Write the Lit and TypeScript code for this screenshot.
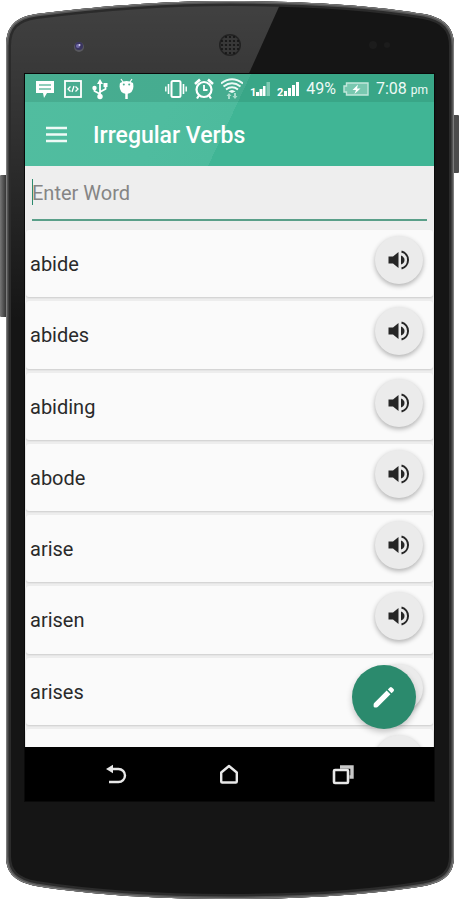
import { LitElement, html, css, svg } from "lit";
import { customElement, state } from "lit/decorators.js";

const BODY =
  "M6 46C6 26 16 17 36 14C92 7 160 1 230 1C300 1 370 5 424 14C445 18 454 28 454 46V856C454 874 444 882 424 886C370 895 300 899 230 899C160 899 92 895 36 886C16 882 6 874 6 856Z";

const VERBS = ["abide", "abides", "abiding", "abode", "arise", "arisen", "arises"];

@customElement("phone-frame")
class PhoneFrame extends LitElement {
  static styles = css`
    :host {
      display: block;
    }
    .art {
      display: block;
      width: 100%;
      height: 100%;
    }
  `;

  render() {
    const holes = [];
    for (let y = 37; y <= 53; y += 4) {
      for (let x = 222; x <= 238; x += 4) {
        if (Math.hypot(x - 230, y - 45) < 10) {
          holes.push(svg`<circle cx=${x} cy=${y} r="1.1" fill="#151515"/>`);
        }
      }
    }
    return html`
      <svg class="art" viewBox="0 0 459 900" preserveAspectRatio="none" aria-hidden="true">
        <defs>
          <linearGradient id="glare" x1="0" y1="0" x2="0" y2="1">
            <stop offset="0" stop-color="#fff" stop-opacity=".19" />
            <stop offset=".35" stop-color="#fff" stop-opacity=".13" />
            <stop offset="1" stop-color="#fff" stop-opacity="0" />
          </linearGradient>
          <linearGradient id="key" x1="0" y1="0" x2="1" y2="0">
            <stop offset="0" stop-color="#777" />
            <stop offset=".5" stop-color="#4a4a4a" />
            <stop offset="1" stop-color="#222" />
          </linearGradient>
          <clipPath id="body"><path d=${BODY} /></clipPath>
        </defs>
        <rect x="0" y="175" width="8" height="142" rx="1" fill="url(#key)" />
        <rect x="452" y="115" width="7" height="58" rx="1" fill="#4c4c4c" />
        <path d=${BODY} fill="#151515" />
        <g clip-path="url(#body)">
          <path d="M0 0H282L138 320H0Z" fill="url(#glare)" />
          <path d=${BODY} fill="none" stroke="#2b2b2b" stroke-width="10" />
          <path d=${BODY} fill="none" stroke="#555" stroke-width="5" />
          <path d=${BODY} fill="none" stroke="#7c7c7c" stroke-width="2" />
        </g>
        <circle cx="79" cy="47" r="5" fill="#58585e" />
        <circle cx="79" cy="46" r="4" fill="#3a3560" />
        <circle cx="78" cy="46" r="2" fill="#6f68a6" />
        <circle cx="79.500" cy="45" r="1" fill="#d8d4f0" />
        <circle cx="230" cy="45" r="11" fill="#222" />
        <circle cx="230" cy="45" r="9.500" fill="#383838" />
        ${holes}
        <circle cx="373" cy="45" r="4" fill="#1c1c1c" />
        <circle cx="387" cy="45" r="3" fill="#1c1c1c" />
      </svg>
    `;
  }
}

@customElement("status-bar")
class StatusBar extends LitElement {
  static styles = css`
    :host {
      display: flex;
      align-items: center;
      justify-content: space-between;
      box-sizing: border-box;
      height: 28px;
      padding: 2px 8px 0 11px;
      background: rgba(0, 40, 20, 0.1);
      color: #eefaf6;
      font-size: 16px;
      line-height: 20px;
      white-space: nowrap;
    }
    .group {
      display: flex;
      align-items: center;
    }
    .notices {
      gap: 10px;
    }
    .system {
      gap: 7px;
    }
    .icon {
      display: block;
      flex: none;
      height: 22px;
    }
    .small {
      font-size: 12px;
    }
    .time {
      width: 50px;
    }
    .digit {
      font: bold 11px Roboto, sans-serif;
    }
  `;

  render() {
    return html`
      <div class="group notices">
        <svg class="icon" width="18" viewBox="0 0 18 22" aria-hidden="true">
          <path d="M0 3H18V15H11L8 20L7 15H0Z" fill="#fff" />
          <path d="M3 7H15M3 11H15" stroke="#69bfa5" stroke-width="1.500" />
        </svg>
        <svg class="icon" width="18" viewBox="0 0 18 22" fill="none" stroke="#fff" aria-hidden="true">
          <rect x="1" y="3" width="16" height="16" stroke-width="1.800" />
          <path d="M6.500 8.500L4 11L6.500 13.500M11.500 8.500L14 11L11.500 13.500M10 8L8 14" stroke-width="1.300" />
        </svg>
        <svg class="icon" width="16" viewBox="0 0 16 22" fill="none" stroke="#fff" aria-hidden="true">
          <path d="M8 4V18M8 16L2.500 13V10M8 14L13.500 11V7" stroke-width="1.800" />
          <path d="M8 1L11 6H5Z" fill="#fff" stroke="none" />
          <circle cx="8" cy="18.500" r="2.700" fill="#fff" stroke="none" />
          <circle cx="2.500" cy="10" r="2.200" fill="#fff" stroke="none" />
          <rect x="11.500" y="5" width="4" height="4" fill="#fff" stroke="none" />
        </svg>
        <svg class="icon" width="16" viewBox="0 0 16 22" aria-hidden="true">
          <path d="M3 1L5 4M14 1L12 4" stroke="#fff" stroke-width="1.200" />
          <path d="M2 5Q8.500 1 15 5Q17 15 8.500 16Q0 15 2 5Z" fill="#fff" />
          <path d="M8.500 15V21" stroke="#fff" stroke-width="2.500" />
          <circle cx="5.800" cy="6.500" r="1" fill="#4daf92" />
          <circle cx="11.200" cy="6.500" r="1" fill="#4daf92" />
        </svg>
      </div>
      <div class="group system">
        <svg class="icon" width="22" viewBox="0 0 22 22" fill="none" stroke="#fff" aria-hidden="true">
          <rect x="6.500" y="3" width="9" height="16" rx="1.500" stroke-width="2" />
          <path d="M3.500 6V16M18.500 6V16" stroke-width="1.600" />
          <path d="M.8 8.500V13.500M21.200 8.500V13.500" stroke-width="1.400" />
        </svg>
        <svg class="icon" width="20" viewBox="0 0 20 22" fill="none" stroke="#fff" aria-hidden="true">
          <circle cx="10" cy="11.500" r="7.500" stroke-width="2.200" />
          <path d="M10 7V12H13.500" stroke-width="1.800" />
          <path d="M1 6L6 1.500M19 6L14 1.500" stroke-width="2.600" />
          <path d="M5 17.500L3 20.500M15 17.500L17 20.500" stroke-width="2.200" />
        </svg>
        <svg class="icon" width="22" viewBox="0 0 22 22" fill="none" stroke="#eefaf6" aria-hidden="true">
          <path d="M0 5.500Q11 -3 22 5.500M2.500 8.500Q11 2 19.500 8.500M5 11.500Q11 7 17 11.500" stroke-width="2" />
          <path d="M7.500 13.500Q11 10.500 14.500 13.500L11 15Z" fill="#eefaf6" stroke="none" />
          <path d="M8 15L10.500 18H9V21H7V18H5.500ZM14 21L11.500 18H13V15H15V18H16.500Z" fill="#a9dccb" stroke="none" />
        </svg>
        <svg class="icon" width="20" viewBox="0 0 20 22" fill="#fff" role="img" aria-label="SIM 1 signal">
          <text class="digit" x="0" y="18">1</text>
          <path d="M6 14H9V18H6ZM9.500 11H12.500V18H9.500ZM13 8H15.500V18H13Z" />
          <path d="M16.500 4H20V18H16.500Z" fill="#7fcab3" />
        </svg>
        <svg class="icon" width="22" viewBox="0 0 22 22" fill="#fff" role="img" aria-label="SIM 2 signal">
          <text class="digit" x="0" y="18">2</text>
          <path d="M7 13H10V18H7ZM11 10H14V18H11ZM15 7H18V18H15ZM19 4H22V18H19Z" />
        </svg>
        <span>49%</span>
        <svg class="icon" width="26" viewBox="0 0 26 22" aria-hidden="true">
          <path d="M3.500 5H25V17H3.500V14H1V8H3.500Z" fill="#79c8b0" stroke="#c2e7dc" stroke-width="1.400" />
          <path d="M15 6.500L9.500 12H13L11.500 16L17.500 10.500H14Z" fill="#fff" />
        </svg>
        <span class="time">7:08 <span class="small">pm</span></span>
      </div>
    `;
  }
}

@customElement("verb-row")
class VerbRow extends LitElement {
  static properties = { word: {} };
  declare word: string;

  static styles = css`
    :host {
      display: flex;
      align-items: flex-start;
      justify-content: space-between;
      box-sizing: border-box;
      min-height: 64px;
      margin: 1px 1px 3px;
      padding: 6px 10px 0 4px;
      border-radius: 3px;
      background: #fafafa;
      box-shadow: 0 1px 2px rgba(0, 0, 0, 0.14);
    }
    .word {
      padding-top: 16px;
      font-size: 20px;
      line-height: 24px;
      color: #2a2a2a;
    }
    .speak {
      display: grid;
      place-items: center;
      flex: none;
      width: 48px;
      height: 48px;
      padding: 0;
      border: 0;
      border-radius: 50%;
      background: #ebebeb;
      box-shadow: 0 2px 5px rgba(0, 0, 0, 0.3);
    }
  `;

  render() {
    return html`
      <span class="word">${this.word}</span>
      <button class="speak" aria-label="Pronounce ${this.word ?? "next verb"}">
        <svg width="24" height="24" viewBox="0 0 24 24" fill="#262626" aria-hidden="true">
          <path d="M1.500 8.500V15.500H6L11.500 20V4L6 8.500Z" />
          <path d="M14 7.500Q17.500 9 17.500 12Q17.500 15 14 16.500Z" />
          <path d="M14.500 3.500A8.800 8.800 0 0 1 14.500 20.500" fill="none" stroke="#262626" stroke-width="2" />
        </svg>
      </button>
    `;
  }
}

@customElement("app-root")
class AppRoot extends LitElement {
  static styles = css`
    :host {
      display: block;
      position: relative;
      min-height: 100vh;
      background: #fff;
      font-family: Roboto, "Noto Sans", sans-serif;
    }
    .frame {
      position: absolute;
      inset: 0;
    }
    .device {
      position: relative;
      display: flex;
      flex-direction: column;
      box-sizing: border-box;
      min-height: 100vh;
      padding: 74px 25px 99px;
    }
    .screen {
      display: flex;
      flex: 1;
      flex-direction: column;
      background: #000;
      box-shadow: 0 0 0 1px #0a0a0a;
    }
    .top {
      position: relative;
      background: linear-gradient(115deg, #51bd9f 0, #4fbc9f 35%, #4dbb9d 50%, #40b595 50%);
      box-shadow: 0 1px 3px rgba(0, 0, 0, 0.3);
    }
    .toolbar {
      display: flex;
      align-items: center;
      gap: 24px;
      height: 64px;
      padding-left: 20px;
    }
    .menu {
      display: block;
      padding: 0;
      border: 0;
      background: none;
    }
    .icon {
      display: block;
    }
    .title {
      margin: 0;
      padding-top: 4px;
      color: #fff;
      font-size: 23px;
      font-weight: 500;
      line-height: 28px;
    }
    .content {
      position: relative;
      display: flex;
      flex: 1;
      flex-direction: column;
      overflow: hidden;
      background: #eee;
    }
    .search {
      display: block;
      height: 63px;
      box-sizing: border-box;
      margin: 0 1px;
      padding: 13px 6px 8px;
      background: #eee;
    }
    .field {
      display: block;
      position: relative;
    }
    .field::before {
      content: "";
      position: absolute;
      top: 0;
      left: 0;
      width: 1px;
      height: 26px;
      background: #2b8a6d;
    }
    .input {
      display: block;
      box-sizing: border-box;
      width: 100%;
      height: 42px;
      padding: 0 0 12px;
      border: 0;
      border-bottom: 2px solid #5a9f89;
      border-radius: 0;
      outline: 0;
      background: none;
      color: #222;
      font: 20px/28px Roboto, "Noto Sans", sans-serif;
    }
    .input::placeholder {
      color: #858585;
      opacity: 1;
    }
    .list {
      display: grid;
      flex: 1;
      grid-template-rows: repeat(7, 1fr) 19px;
      margin: 0;
    }
    .fab {
      position: absolute;
      right: 18px;
      bottom: 18px;
      display: grid;
      place-items: center;
      width: 64px;
      height: 64px;
      padding: 0;
      border: 0;
      border-radius: 50%;
      background: #2b8a6d;
      box-shadow: 0 3px 6px rgba(0, 0, 0, 0.22);
    }
    .nav {
      display: grid;
      grid-template-columns: repeat(3, 1fr);
      box-sizing: border-box;
      height: 54px;
      padding: 2px 34px 0;
    }
    .key {
      display: grid;
      place-items: center;
      padding: 0;
      border: 0;
      background: none;
    }
  `;

  @state() private query = "";

  render() {
    return html`
      <phone-frame class="frame"></phone-frame>
      <div class="device">
        <div class="screen">
          <header class="top">
            <status-bar></status-bar>
            <div class="toolbar">
              <button class="menu" aria-label="Menu">
                <svg class="icon" width="24" height="24" viewBox="0 0 24 24" aria-hidden="true">
                  <path d="M1 6H22M1 12.500H22M1 19H22" stroke="#effaf7" stroke-width="2.400" />
                </svg>
              </button>
              <h1 class="title">Irregular Verbs</h1>
            </div>
          </header>
          <main class="content">
            <div class="search">
              <label class="field">
                <input
                  class="input"
                  type="text"
                  aria-label="Enter Word"
                  placeholder="Enter Word"
                  .value=${this.query}
                  @input=${(e: Event) => (this.query = (e.target as HTMLInputElement).value)}
                />
              </label>
            </div>
            <div class="list">
              ${VERBS.map((word) => html`<verb-row .word=${word}></verb-row>`)}
              <verb-row></verb-row>
            </div>
            <button class="fab" aria-label="Edit">
              <svg class="icon" width="28" height="28" viewBox="0 0 24 24" fill="#fff" aria-hidden="true">
                <path d="M3.600 17.200L14.300 6.500L17.500 9.700L6.800 20.400Q6.300 20.900 5.500 20.900H4Q3.100 20.900 3.100 20V18.500Q3.100 17.700 3.600 17.200ZM15.300 5.500L17 3.800Q17.900 2.900 18.800 3.800L20.200 5.200Q21.100 6.100 20.200 7L18.500 8.700Z" />
              </svg>
            </button>
          </main>
          <nav class="nav">
            <button class="key" aria-label="Back">
              <svg class="icon" width="22" height="22" viewBox="0 0 22 22" fill="none" aria-hidden="true">
                <path d="M5 5H13.500A6.500 6.500 0 0 1 13.500 18H4" stroke="#e8e8e8" stroke-width="2.400" />
                <path d="M1 5L8 .8V9.200Z" fill="#e8e8e8" />
              </svg>
            </button>
            <button class="key" aria-label="Home">
              <svg class="icon" width="22" height="22" viewBox="0 0 22 22" fill="none" stroke="#e8e8e8" aria-hidden="true">
                <path d="M3.200 8.500L11 2L18.800 8.500V17.500Q18.800 18.500 17.800 18.500H4.200Q3.200 18.500 3.200 17.500Z" stroke-width="2.400" stroke-linejoin="round" />
              </svg>
            </button>
            <button class="key" aria-label="Recent apps">
              <svg class="icon" width="22" height="22" viewBox="0 0 22 22" fill="none" aria-hidden="true">
                <path d="M8 3H20V13H17.500" stroke="#c8c8c8" stroke-width="3.400" />
                <rect x="2" y="6" width="14" height="13" rx="1" fill="#000" stroke="#e8e8e8" stroke-width="2.600" />
              </svg>
            </button>
          </nav>
        </div>
      </div>
    `;
  }
}
